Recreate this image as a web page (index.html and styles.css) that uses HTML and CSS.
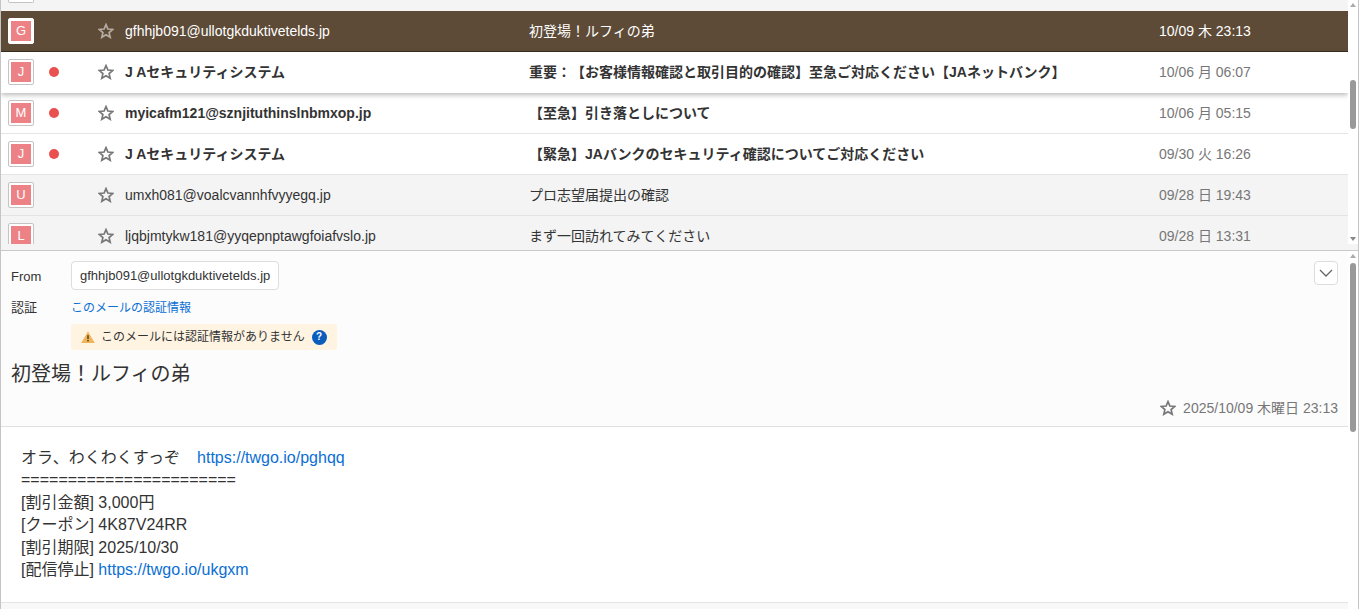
FILE: index.html
```html
<!DOCTYPE html>
<html lang="ja">
<head>
<meta charset="utf-8">
<title>Mail</title>
<link rel="stylesheet" href="styles.css">
</head>
<body>
<svg class="defs" width="0" height="0" aria-hidden="true"><defs>
<symbol id="star" viewBox="0 0 16 16"><path d="M8 1.6l1.9 4.4 4.8.4-3.6 3.2 1.1 4.7L8 11.8l-4.2 2.5 1.1-4.7-3.6-3.2 4.8-.4z" fill="none" stroke="currentColor" stroke-width="1.7" stroke-linejoin="miter"/></symbol>
</defs></svg>
<div class="app">
  <section class="list">
    <div class="list-view">
      <div class="rows">
        <div class="row partial"><span class="avatar-cell"><span class="avatar-frame top-frame"></span></span></div>
        <div class="row selected">
          <span class="avatar-cell"><span class="avatar-frame"><span class="avatar">G</span></span></span>
          <span class="dot-cell"></span>
          <svg class="star"><use href="#star"/></svg>
          <span class="sender">gfhhjb091@ullotgkduktivetelds.jp</span>
          <span class="subject">初登場！ルフィの弟</span>
          <span class="date">10/09 木 23:13</span>
        </div>
        <div class="row unread raised">
          <span class="avatar-cell"><span class="avatar-frame"><span class="avatar">J</span></span></span>
          <span class="dot-cell"><span class="dot"></span></span>
          <svg class="star"><use href="#star"/></svg>
          <span class="sender">J Aセキュリティシステム</span>
          <span class="subject">重要：【お客様情報確認と取引目的の確認】至急ご対応ください【JAネットバンク】</span>
          <span class="date">10/06 月 06:07</span>
        </div>
        <div class="row unread">
          <span class="avatar-cell"><span class="avatar-frame"><span class="avatar">M</span></span></span>
          <span class="dot-cell"><span class="dot"></span></span>
          <svg class="star"><use href="#star"/></svg>
          <span class="sender">myicafm121@sznjituthinslnbmxop.jp</span>
          <span class="subject">【至急】引き落としについて</span>
          <span class="date">10/06 月 05:15</span>
        </div>
        <div class="row unread">
          <span class="avatar-cell"><span class="avatar-frame"><span class="avatar">J</span></span></span>
          <span class="dot-cell"><span class="dot"></span></span>
          <svg class="star"><use href="#star"/></svg>
          <span class="sender">J Aセキュリティシステム</span>
          <span class="subject">【緊急】JAバンクのセキュリティ確認についてご対応ください</span>
          <span class="date">09/30 火 16:26</span>
        </div>
        <div class="row read">
          <span class="avatar-cell"><span class="avatar-frame"><span class="avatar">U</span></span></span>
          <span class="dot-cell"></span>
          <svg class="star"><use href="#star"/></svg>
          <span class="sender">umxh081@voalcvannhfvyyegq.jp</span>
          <span class="subject">プロ志望届提出の確認</span>
          <span class="date">09/28 日 19:43</span>
        </div>
        <div class="row read last">
          <span class="avatar-cell"><span class="avatar-frame"><span class="avatar">L</span></span></span>
          <span class="dot-cell"></span>
          <svg class="star"><use href="#star"/></svg>
          <span class="sender">ljqbjmtykw181@yyqepnptawgfoiafvslo.jp</span>
          <span class="subject">まず一回訪れてみてください</span>
          <span class="date">09/28 日 13:31</span>
        </div>
      </div>
      <div class="scrollbar list-bar">
        <span class="arrow up"></span>
        <span class="track"><span class="thumb list-thumb"></span></span>
        <span class="arrow down"></span>
      </div>
    </div>
  </section>
  <section class="detail">
    <div class="detail-main">
      <header class="head">
        <div class="meta from-line">
          <span class="label">From</span>
          <span class="from-chip">gfhhjb091@ullotgkduktivetelds.jp</span>
          <button class="expand" type="button" aria-label="expand"><svg width="14" height="8" viewBox="0 0 14 8"><path d="M1 1l6 6 6-6" fill="none" stroke="#666" stroke-width="1.3"/></svg></button>
        </div>
        <div class="meta auth-line">
          <span class="label">認証</span>
          <a class="auth-link">このメールの認証情報</a>
        </div>
        <div class="warn-line">
          <div class="warn">
            <svg class="warn-icon" width="14" height="12" viewBox="0 0 14 12"><path d="M7 .5L13.8 12H.2z" fill="#f0b45a"/><rect x="6.3" y="4.2" width="1.4" height="4" fill="#4a3a20"/><rect x="6.3" y="9" width="1.4" height="1.4" fill="#4a3a20"/></svg>
            <span>このメールには認証情報がありません</span>
            <span class="help">?</span>
          </div>
        </div>
        <h1 class="title">初登場！ルフィの弟</h1>
        <div class="stamp">
          <svg class="star stamp-star"><use href="#star"/></svg>
          <span>2025/10/09 木曜日 23:13</span>
        </div>
      </header>
      <article class="body">
        <p class="first">オラ、わくわくすっぞ　<a class="first-link">https://twgo.io/pghqq</a></p>
        <p>=======================</p>
        <p>[割引金額] 3,000円</p>
        <p>[クーポン] 4K87V24RR</p>
        <p>[割引期限] 2025/10/30</p>
        <p>[配信停止] <a>https://twgo.io/ukgxm</a></p>
      </article>
    </div>
    <div class="scrollbar detail-bar">
      <span class="arrow up"></span>
      <span class="track"><span class="thumb detail-thumb"></span></span>
    </div>
  </section>
</div>
</body>
</html>
```
FILE: styles.css
```css
* { box-sizing: border-box; }
html, body { margin: 0; padding: 0; height: 100%; background: #fff; overflow: hidden; }
body { font-family: "Liberation Sans", "Noto Sans CJK JP", sans-serif; color: #333; text-spacing-trim: space-all; }
.defs { position: absolute; }
.app { width: 1359px; height: 609px; border-left: 1px solid #c4c4c4; border-right: 1px solid #c4c4c4; display: flex; flex-direction: column; }

.list { height: 251px; flex: none; padding-bottom: 6px; background: #f4f4f4; border-bottom: 1px solid #c8c8c8; }
.list-view { height: 244px; display: flex; }
.rows { flex: 1; min-width: 0; overflow: hidden; background: #f4f4f4; }
.row { height: 41px; display: flex; align-items: center; border-bottom: 1px solid #e4e4e4; background: #fff; font-size: 14px; line-height: 18px; position: relative; }
.partial { height: 11px; background: #f4f4f4; align-items: flex-start; border-bottom: 0; }
.selected { height: 41px; background: #5d4b37; color: #fff; border-bottom: 1px solid #3d3022; }
.raised { box-shadow: 0 2px 5px rgba(0,0,0,.28); z-index: 1; border-bottom-color: transparent; }
.read { background: #f4f4f4; }
.last { height: 40px; border-bottom: 0; }
.unread .sender, .unread .subject { font-weight: 700; }
.selected .date { color: #fff; }

.avatar-cell { width: 47px; padding-left: 7px; flex: none; display: flex; }
.avatar-frame { width: 26px; height: 26px; border: 1px solid #c4c4c4; border-radius: 2px; background: #fff; padding: 2px; display: block; overflow: hidden; }
.top-frame { height: 3px; border-top: 0; border-radius: 0 0 2px 2px; padding: 0; }
.selected .avatar-frame { border-color: #fff; }
.avatar { display: flex; align-items: center; justify-content: center; width: 20px; height: 20px; background: #ed8286; color: #fff; font-size: 13px; }
.dot-cell { width: 50px; flex: none; display: flex; padding-left: 1px; }
.dot { width: 10px; height: 10px; border-radius: 50%; background: #e95050; display: block; }
.star { width: 16px; height: 16px; color: #777; flex: none; display: block; }
.selected .star { color: #b5aca2; }
.sender { margin-left: 11px; width: 404px; flex: none; white-space: nowrap; }
.subject { width: 630px; flex: none; white-space: nowrap; }
.date { color: #777; white-space: nowrap; }

.scrollbar { width: 10px; flex: none; background: #fff; display: flex; flex-direction: column; align-items: center; }
.arrow { width: 0; height: 0; border-left: 3px solid transparent; border-right: 3px solid transparent; flex: none; }
.arrow.up { border-bottom: 4px solid #aaa; margin: 3px 0 2px; }
.arrow.down { border-top: 4px solid #888; margin: 2px 0 3px; }
.track { flex: 1; width: 100%; display: flex; flex-direction: column; align-items: center; }
.thumb { width: 6px; background: #999; border-radius: 3px; display: block; }
.list-thumb { height: 49px; margin-top: 71px; }
.detail-thumb { height: 169px; margin-top: 3px; }

.detail { flex: 1; min-height: 0; display: flex; background: #f8f8f8; }
.detail-main { flex: 1; min-width: 0; display: flex; flex-direction: column; }
.head { height: 176px; flex: none; background: #fcfcfc; border-bottom: 1px solid #e0e0e0; padding: 10px 10px 0 10px; }
.meta { display: flex; align-items: center; font-size: 13px; line-height: 16px; }
.label { width: 60px; flex: none; color: #333; padding-top: 3px; }
.from-line { height: 29px; position: relative; }
.from-chip { border: 1px solid #ddd; border-radius: 4px; background: #fff; height: 29px; padding: 0 8px; display: flex; align-items: center; font-size: 13px; color: #333; }
.expand { margin-left: auto; width: 24px; height: 24px; padding: 0; border: 1px solid #ddd; border-radius: 4px; background: #fff; display: flex; align-items: center; justify-content: center; align-self: flex-start; }
.auth-line { margin-top: 4px; height: 24px; }
.auth-link { color: #0b6fd4; font-size: 12px; padding-top: 4px; }
.warn-line { padding-left: 60px; margin-top: 6px; display: flex; }
.warn { display: flex; align-items: center; height: 26px; padding: 0 10px; background: #fff4e2; border-radius: 3px; font-size: 12px; line-height: 16px; color: #333; }
.warn-icon { margin-right: 6px; }
.help { width: 15px; height: 15px; border-radius: 50%; background: #0a5cbd; color: #fff; font-size: 10px; font-weight: 700; margin-left: 7px; display: flex; align-items: center; justify-content: center; }
.title { margin: 11px 0 0 0; font-size: 20px; font-weight: 400; line-height: 26px; color: #333; }
.stamp { margin-top: 13px; display: flex; align-items: center; justify-content: flex-end; font-size: 14px; line-height: 16px; color: #777; gap: 7px; }
.body { height: 176px; flex: none; background: #fff; border-bottom: 1px solid #e4e4e4; padding: 20px 20px 0 20px; font-size: 16px; line-height: 22.4px; color: #333; }
.body p { margin: 0; white-space: nowrap; }
.body a { color: #0b6fd4; }
.body .first-link { margin-left: 1px; }
```
